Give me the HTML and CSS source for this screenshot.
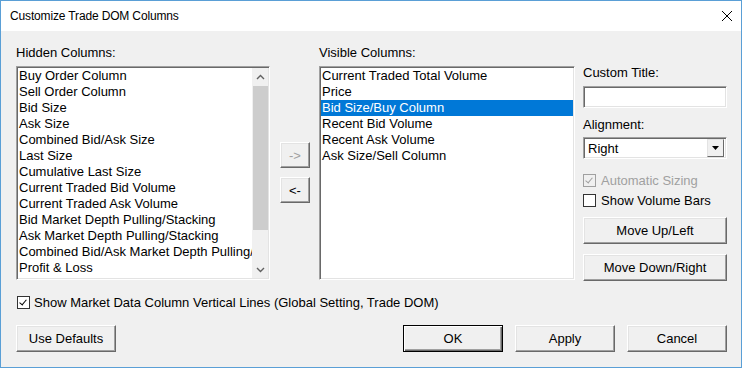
FILE: index.html
```html
<!DOCTYPE html>
<html lang="en">
<head>
    <meta charset="UTF-8">
    <title>Customize Trade DOM Columns</title>
    <link rel="stylesheet" href="styles.css">
</head>
<body>
    <div class="window">
        <div class="titlebar">
            <span class="title">Customize Trade DOM Columns</span>
            <svg class="close" width="12" height="12" viewBox="0 0 12 12">
                <path d="M1 1 L11 11 M11 1 L1 11" stroke="#000" stroke-width="1" fill="none"/>
            </svg>
        </div>
        <div class="content">
            <div class="columns">
                <div class="col hidden-col">
                    <div class="label">Hidden Columns:</div>
                    <div class="list">
                        <div class="items">
                            <div class="item">Buy Order Column</div>
                            <div class="item">Sell Order Column</div>
                            <div class="item">Bid Size</div>
                            <div class="item">Ask Size</div>
                            <div class="item">Combined Bid/Ask Size</div>
                            <div class="item">Last Size</div>
                            <div class="item">Cumulative Last Size</div>
                            <div class="item">Current Traded Bid Volume</div>
                            <div class="item">Current Traded Ask Volume</div>
                            <div class="item">Bid Market Depth Pulling/Stacking</div>
                            <div class="item">Ask Market Depth Pulling/Stacking</div>
                            <div class="item">Combined Bid/Ask Market Depth Pulling/Stacking</div>
                            <div class="item">Profit &amp; Loss</div>
                            <div class="item">Label Column</div>
                        </div>
                        <div class="scrollbar">
                            <div class="arrow">
                                <svg width="9" height="6" viewBox="0 0 9 6"><path d="M1 5 L4.5 1.5 L8 5" stroke="#606060" stroke-width="1.4" fill="none"/></svg>
                            </div>
                            <div class="track"><div class="thumb"></div></div>
                            <div class="arrow">
                                <svg width="9" height="6" viewBox="0 0 9 6"><path d="M1 1 L4.5 4.5 L8 1" stroke="#606060" stroke-width="1.4" fill="none"/></svg>
                            </div>
                        </div>
                    </div>
                </div>
                <div class="mover">
                    <button class="btn small disabled">-&gt;</button>
                    <button class="btn small">&lt;-</button>
                </div>
                <div class="col visible-col">
                    <div class="label">Visible Columns:</div>
                    <div class="list">
                        <div class="items">
                            <div class="item">Current Traded Total Volume</div>
                            <div class="item">Price</div>
                            <div class="item selected">Bid Size/Buy Column</div>
                            <div class="item">Recent Bid Volume</div>
                            <div class="item">Recent Ask Volume</div>
                            <div class="item">Ask Size/Sell Column</div>
                        </div>
                    </div>
                </div>
                <div class="panel">
                    <div class="label">Custom Title:</div>
                    <div class="field"></div>
                    <div class="label align-label">Alignment:</div>
                    <div class="combo">
                        <span class="combo-text">Right</span>
                        <span class="combo-btn">
                            <svg width="7" height="4" viewBox="0 0 7 4"><path d="M0 0 H7 L3.5 4 Z" fill="#000"/></svg>
                        </span>
                    </div>
                    <div class="check-row first disabled">
                        <span class="checkbox checked"></span>
                        <span>Automatic Sizing</span>
                    </div>
                    <div class="check-row">
                        <span class="checkbox"></span>
                        <span>Show Volume Bars</span>
                    </div>
                    <button class="btn wide up">Move Up/Left</button>
                    <button class="btn wide down">Move Down/Right</button>
                </div>
            </div>
            <div class="check-row global">
                <span class="checkbox checked"></span>
                <span>Show Market Data Column Vertical Lines (Global Setting, Trade DOM)</span>
            </div>
            <div class="toolbar">
                <button class="btn">Use Defaults</button>
                <div class="spacer"></div>
                <button class="btn default">OK</button>
                <button class="btn">Apply</button>
                <button class="btn">Cancel</button>
            </div>
        </div>
    </div>
</body>
</html>
```

FILE: styles.css
```css
* {
    padding: 0;
    margin: 0;
    box-sizing: border-box;
}

body {
    background: #f0f0f0;
    font-family: "Liberation Sans", Arial, sans-serif;
    font-size: 13px;
    color: #000;
}

.window {
    width: 742px;
    height: 368px;
    border: 1px solid #5a9fd6;
    background: #f0f0f0;
    display: flex;
    flex-direction: column;
}

.titlebar {
    height: 30px;
    background: #fff;
    display: flex;
    flex-direction: row;
    align-items: center;
    padding: 0 8px 0 9px;
}

.title {
    font-size: 12px;
    letter-spacing: -0.15px;
    flex: 1;
}

.content {
    padding: 14px 14px 0 15px;
    display: flex;
    flex-direction: column;
}

.columns {
    display: flex;
    flex-direction: row;
}

.label {
    height: 16px;
    line-height: 16px;
    margin-bottom: 5px;
}

.hidden-col {
    width: 254px;
}

.visible-col {
    width: 256px;
}

.list {
    height: 214px;
    background: #fff;
    border: 1px solid;
    border-color: #a0a0a0 #fff #fff #a0a0a0;
    box-shadow: inset 1px 1px #696969, inset -1px -1px #e3e3e3;
    display: flex;
    flex-direction: row;
    overflow: hidden;
    padding: 1px;
}

.items {
    flex: 1;
    overflow: hidden;
}

.item {
    height: 16px;
    line-height: 16px;
    padding-left: 1px;
    white-space: nowrap;
}

.item.selected {
    background: #0078d7;
    color: #fff;
}

.scrollbar {
    width: 16px;
    display: flex;
    flex-direction: column;
    background: #f0f0f0;
}

.arrow {
    height: 17px;
    display: flex;
    align-items: center;
    justify-content: center;
}

.track {
    flex: 1;
}

.thumb {
    height: 144px;
    background: #cdcdcd;
    margin: 1px 0 0 1px;
}

.mover {
    width: 30px;
    margin: 0 9px 0 10px;
    padding-top: 97px;
    display: flex;
    flex-direction: column;
}

.btn {
    font-family: "Liberation Sans", Arial, sans-serif;
    font-size: 13px;
    color: #000;
    background: #f0f0f0;
    border: 1px solid;
    border-color: #fff #696969 #696969 #fff;
    box-shadow: inset -1px -1px #a0a0a0, inset 1px 1px #e3e3e3;
    height: 27px;
    width: 100px;
    outline: none;
}

.btn.small {
    width: 30px;
    height: 26px;
    margin-bottom: 9px;
}

.btn.disabled {
    color: #a0a0a0;
}

.btn.default {
    border-color: #000;
    box-shadow: inset 1px 1px #fff, inset -1px -1px #696969, inset -2px -2px #a0a0a0;
}

.panel {
    width: 144px;
    margin-left: 8px;
    padding-top: 20px;
    display: flex;
    flex-direction: column;
}

.panel .label {
    margin-top: 0;
    margin-bottom: 5px;
}

.panel .align-label {
    margin-top: 9px;
    margin-bottom: 4px;
}

.field,
.combo {
    height: 22px;
    background: #fff;
    border: 1px solid;
    border-color: #a0a0a0 #fff #fff #a0a0a0;
    box-shadow: inset 1px 1px #696969, inset -1px -1px #e3e3e3;
}

.combo {
    display: flex;
    flex-direction: row;
    align-items: center;
    padding: 2px;
}

.combo-text {
    flex: 1;
    padding-left: 2px;
}

.combo-btn {
    width: 17px;
    height: 18px;
    background: #f0f0f0;
    border: 1px solid;
    border-color: #e3e3e3 #696969 #696969 #e3e3e3;
    display: flex;
    align-items: center;
    justify-content: center;
}

.check-row {
    height: 20px;
    display: flex;
    flex-direction: row;
    align-items: center;
    white-space: nowrap;
}

.check-row.first {
    margin-top: 11px;
}

.check-row.disabled {
    color: #a0a0a0;
}

.checkbox {
    width: 13px;
    height: 13px;
    border: 1px solid #333;
    background: #fff;
    margin: 0 5px 0 0;
    position: relative;
}

.checkbox.checked::after {
    content: "";
    position: absolute;
    left: 3px;
    top: 1px;
    width: 3px;
    height: 6px;
    border: solid #000;
    border-width: 0 1.5px 1.5px 0;
    transform: rotate(40deg);
}

.check-row.disabled .checkbox {
    border-color: #a0a0a0;
    background: #f0f0f0;
}

.check-row.disabled .checkbox.checked::after {
    border-color: #a0a0a0;
}

.btn.wide {
    width: 144px;
}

.btn.up {
    margin-top: 7px;
}

.btn.down {
    margin-top: 10px;
}

.check-row.global {
    margin-top: 11px;
    padding-left: 1px;
}

.check-row.global .checkbox {
    margin-right: 4px;
}

.toolbar {
    margin-top: 13px;
    display: flex;
    flex-direction: row;
    gap: 12px;
}

.spacer {
    flex: 1;
}
```
